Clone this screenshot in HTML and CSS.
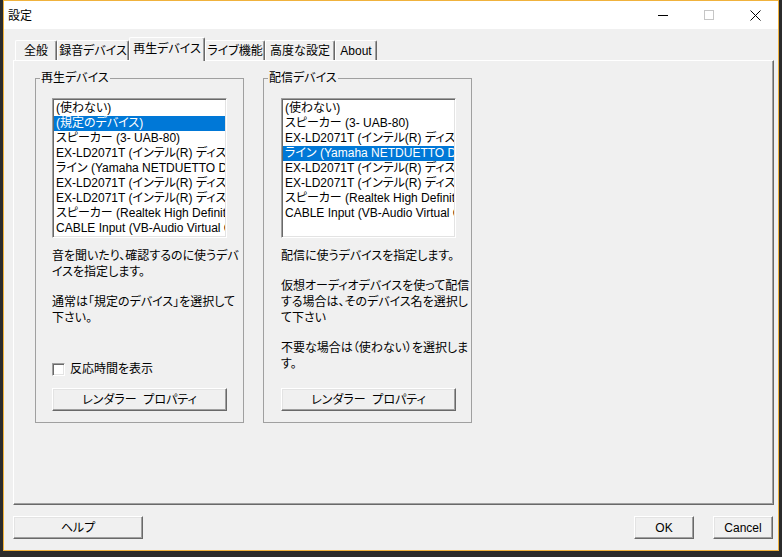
FILE: index.html
```html
<!DOCTYPE html>
<html lang="ja">
  <head>
    <meta charset="UTF-8" />
    <title>設定</title>
    <link rel="stylesheet" href="styles.css">
  </head>
  <body>
    <div class="window">
      <div class="titlebar">
        <span class="title">設定</span>
        <div class="caption">
          <span class="caption-btn">
            <svg width="10" height="10" viewBox="0 0 10 10"><path d="M0 5.5h10" stroke="#000" stroke-width="1"/></svg>
          </span>
          <span class="caption-btn">
            <svg width="10" height="10" viewBox="0 0 10 10"><rect x="0.5" y="0.5" width="9" height="9" fill="none" stroke="#c6c6c6" stroke-width="1"/></svg>
          </span>
          <span class="caption-btn">
            <svg width="11" height="11" viewBox="0 0 11 11"><path d="M0.5 0.5l10 10M10.5 0.5l-10 10" stroke="#000" stroke-width="1"/></svg>
          </span>
        </div>
      </div>

      <div class="client">
        <div class="tabs">
          <div class="tab tab-general">全般</div>
          <div class="tab tab-rec">録音デバイス</div>
          <div class="tab tab-play current">再生デバイス</div>
          <div class="tab tab-live">ライブ機能</div>
          <div class="tab tab-adv">高度な設定</div>
          <div class="tab tab-about">About</div>
        </div>

        <div class="tab-panel">
          <fieldset class="group">
            <legend>再生デバイス</legend>
            <div class="group-body">
              <ul class="listbox">
                <li>(使わない)</li>
                <li class="selected">(規定のデバイス)</li>
                <li>スピーカー (3- UAB-80)</li>
                <li>EX-LD2071T (インテル(R) ディスプレイ用オーディオ)</li>
                <li>ライン (Yamaha NETDUETTO Driver)</li>
                <li>EX-LD2071T (インテル(R) ディスプレイ用オーディオ)</li>
                <li>EX-LD2071T (インテル(R) ディスプレイ用オーディオ)</li>
                <li>スピーカー (Realtek High Definition Audio)</li>
                <li>CABLE Input (VB-Audio Virtual Cable)</li>
              </ul>
              <div class="desc">
                <p>音を聞いたり、確認するのに使うデバ<br>イスを指定します。</p>
                <p>通常は「規定のデバイス」を選択して<br>下さい。</p>
              </div>
              <label class="check">
                <span class="check-box"></span>
                反応時間を表示
              </label>
              <button class="btn btn-group btn-after-check">レンダラー&nbsp; プロパティ</button>
            </div>
          </fieldset>

          <fieldset class="group">
            <legend>配信デバイス</legend>
            <div class="group-body">
              <ul class="listbox">
                <li>(使わない)</li>
                <li>スピーカー (3- UAB-80)</li>
                <li>EX-LD2071T (インテル(R) ディスプレイ用オーディオ)</li>
                <li class="selected">ライン (Yamaha NETDUETTO Driver)</li>
                <li>EX-LD2071T (インテル(R) ディスプレイ用オーディオ)</li>
                <li>EX-LD2071T (インテル(R) ディスプレイ用オーディオ)</li>
                <li>スピーカー (Realtek High Definition Audio)</li>
                <li>CABLE Input (VB-Audio Virtual Cable)</li>
              </ul>
              <div class="desc">
                <p>配信に使うデバイスを指定します。</p>
                <p>仮想オーディオデバイスを使って配信<br>する場合は、そのデバイス名を選択し<br>て下さい</p>
                <p>不要な場合は（使わない）を選択しま<br>す。</p>
              </div>
              <button class="btn btn-group btn-after-text">レンダラー&nbsp; プロパティ</button>
            </div>
          </fieldset>
        </div>

        <div class="footer">
          <button class="btn btn-help">ヘルプ</button>
          <div class="footer-right">
            <button class="btn btn-small">OK</button>
            <button class="btn btn-small">Cancel</button>
          </div>
        </div>
      </div>
    </div>
  </body>
</html>
```

FILE: styles.css
```css
html,
body {
  margin: 0;
  padding: 0;
}
body {
  width: 782px;
  height: 557px;
  overflow: hidden;
  background: #2b2b2b;
  font-family: "Liberation Sans", "Noto Sans CJK JP", sans-serif;
  font-size: 12px;
  line-height: 16px;
  color: #000;
  font-feature-settings: "palt";
}
.window {
  box-sizing: border-box;
  width: 776px;
  height: 551px;
  margin-left: 3px;
  border: 1px solid #f0b23c;
  background: #f0f0f0;
}

/* title bar */
.titlebar {
  height: 28px;
  background: #ffffff;
  display: flex;
  align-items: center;
  justify-content: space-between;
}
.title {
  padding-left: 4px;
  font-family: "Noto Sans CJK JP", sans-serif;
}
.caption {
  display: flex;
  height: 28px;
}
.caption-btn {
  width: 46px;
  height: 28px;
  display: flex;
  align-items: center;
  justify-content: center;
}

.client {
  padding: 0 4px 0 9px;
}

/* tabs */
.tabs {
  display: flex;
  align-items: flex-end;
  height: 23px;
  margin-top: 8px;
  padding-left: 2px;
}
.tab {
  box-sizing: border-box;
  height: 20px;
  padding-top: 2px;
  text-align: center;
  border-top: 1px solid #ffffff;
  border-left: 1px solid #ffffff;
  border-right: 1px solid #696969;
  box-shadow: inset -1px 0 0 #a0a0a0;
  border-radius: 2px 2px 0 0;
  background: #f0f0f0;
  white-space: nowrap;
}
.tab.current {
  position: relative;
  z-index: 1;
  height: 24px;
  margin-bottom: -1px;
  padding-top: 3px;
}
.tab-general { width: 42px; }
.tab-rec { width: 72px; }
.tab-play { width: 76px; }
.tab-live { width: 60px; }
.tab-adv { width: 70px; }
.tab-about { width: 42px; }

.tab-panel {
  box-sizing: border-box;
  height: 445px;
  display: flex;
  gap: 19px;
  padding: 9px 0 0 21px;
  border-top: 1px solid #ffffff;
  border-left: 1px solid #ffffff;
  border-right: 1px solid #696969;
  border-bottom: 1px solid #696969;
  box-shadow: inset -1px -1px 0 #a0a0a0;
}

/* group boxes */
.group {
  box-sizing: border-box;
  width: 209px;
  min-width: 0;
  margin: 0;
  padding: 0;
  border: 1px solid #a0a0a0;
  align-self: flex-start;
}
.group legend {
  margin-left: 4px;
  padding: 0 1px;
  line-height: 16px;
}
.group-body {
  padding: 0 16px 11px;
}
.group + .group .group-body {
  padding-left: 17px;
  padding-right: 15px;
}

.listbox {
  box-sizing: border-box;
  height: 140px;
  margin: 12px 0 0;
  padding: 0;
  list-style: none;
  overflow: hidden;
  background: #ffffff;
  border-top: 1px solid #a0a0a0;
  border-left: 1px solid #a0a0a0;
  border-right: 1px solid #ffffff;
  border-bottom: 1px solid #ffffff;
  box-shadow: inset 1px 1px 0 #696969, inset -1px -1px 0 #e3e3e3;
}
.listbox li {
  height: 15px;
  line-height: 15px;
  padding-left: 2px;
  margin: 0 1px;
  white-space: nowrap;
  overflow: hidden;
  text-overflow: clip;
}
.listbox li:first-child {
  margin-top: 2px;
}
.listbox li.selected {
  background: #0078d7;
  color: #ffffff;
}

.desc {
  margin-top: 10px;
  white-space: nowrap;
}
.desc p {
  margin: 0;
}
.desc p + p {
  margin-top: 14px;
}

.check {
  display: flex;
  align-items: center;
  gap: 5px;
  margin-top: 35px;
  height: 16px;
}
.check-box {
  box-sizing: border-box;
  width: 13px;
  height: 13px;
  background: #ffffff;
  border-top: 1px solid #a0a0a0;
  border-left: 1px solid #a0a0a0;
  border-right: 1px solid #ffffff;
  border-bottom: 1px solid #ffffff;
  box-shadow: inset 1px 1px 0 #696969, inset -1px -1px 0 #e3e3e3;
}

/* buttons */
.btn {
  box-sizing: border-box;
  display: block;
  height: 23px;
  margin: 0;
  padding: 0;
  font: inherit;
  color: #000;
  background: #f0f0f0;
  border-top: 1px solid #ffffff;
  border-left: 1px solid #ffffff;
  border-right: 1px solid #696969;
  border-bottom: 1px solid #696969;
  box-shadow: inset -1px -1px 0 #a0a0a0, inset 1px 1px 0 #e3e3e3;
  border-radius: 0;
}
.btn-group {
  width: 100%;
}
.btn-after-check {
  margin-top: 11px;
}
.btn-after-text {
  margin-top: 16px;
}

.footer {
  display: flex;
  justify-content: space-between;
  margin-top: 11px;
}
.footer-right {
  display: flex;
  gap: 19px;
  margin-right: 1px;
}
.btn-help {
  width: 130px;
}
.btn-small {
  width: 60px;
}
```
